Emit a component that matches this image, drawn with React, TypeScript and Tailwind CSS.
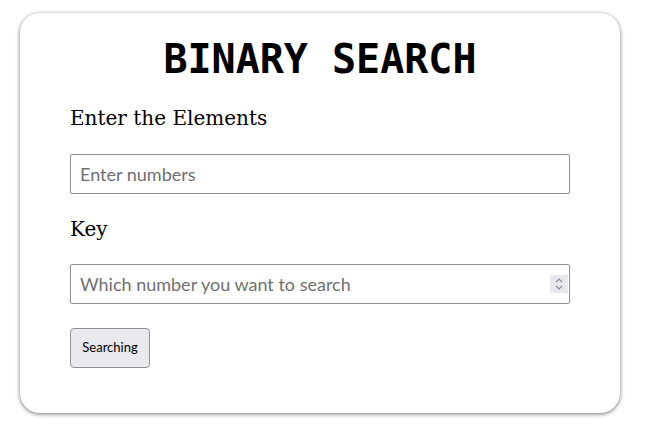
import React, { useState } from 'react';

const App: React.FC = () => {
  const [elements, setElements] = useState('');
  const [key, setKey] = useState('');

  return (
    <div className="min-h-screen bg-white pt-[13px]">
      <div className="ml-[20px] w-[600px] h-[400px] rounded-[20px] bg-white shadow-[0_1px_4px_rgba(0,0,0,0.55)] px-[50px] pt-[22px]">
        <h1 className="text-center text-[40px] leading-[48px] font-bold text-black font-['DejaVu_Sans_Mono',monospace]">
          BINARY SEARCH
        </h1>

        <p className="mt-[23px] text-[20px] leading-[24px] text-black font-['DejaVu_Serif',serif]">
          Enter the Elements
        </p>
        <input
          type="text"
          value={elements}
          onChange={e => setElements(e.target.value)}
          placeholder="Enter numbers"
          className="mt-[24px] block w-[500px] h-[40px] border border-[#8f8f9d] rounded-[2px] px-[9px] text-[18px] text-black placeholder:text-[#707070] font-['Lato',sans-serif] outline-none"
        />

        <p className="mt-[23px] text-[20px] leading-[24px] text-black font-['DejaVu_Serif',serif]">
          Key
        </p>
        <div className="relative mt-[23px] w-[500px]">
          <input
            type="text"
            value={key}
            onChange={e => setKey(e.target.value)}
            placeholder="Which number you want to search"
            className="block w-[500px] h-[40px] border border-[#8f8f9d] rounded-[2px] px-[9px] text-[18px] text-black placeholder:text-[#707070] font-['Lato',sans-serif] outline-none"
          />
          {/* number spinner */}
          <span className="absolute right-[2px] top-[11px] w-[18px] h-[18px] bg-[#e9e9ed] flex flex-col items-center justify-center gap-[2px]">
            <svg width="8" height="5" viewBox="0 0 8 5" fill="none">
              <path d="M1 4L4 1L7 4" stroke="#8a8a94" strokeWidth="1.2" />
            </svg>
            <svg width="8" height="5" viewBox="0 0 8 5" fill="none">
              <path d="M1 1L4 4L7 1" stroke="#8a8a94" strokeWidth="1.2" />
            </svg>
          </span>
        </div>

        <button
          type="button"
          className="mt-[24px] block w-[80px] h-[40px] bg-[#e9e9ed] border border-[#8f8f9d] rounded-[4px] text-[13px] text-black font-['Lato',sans-serif]"
        >
          Searching
        </button>
      </div>
    </div>
  );
};

export default App;
